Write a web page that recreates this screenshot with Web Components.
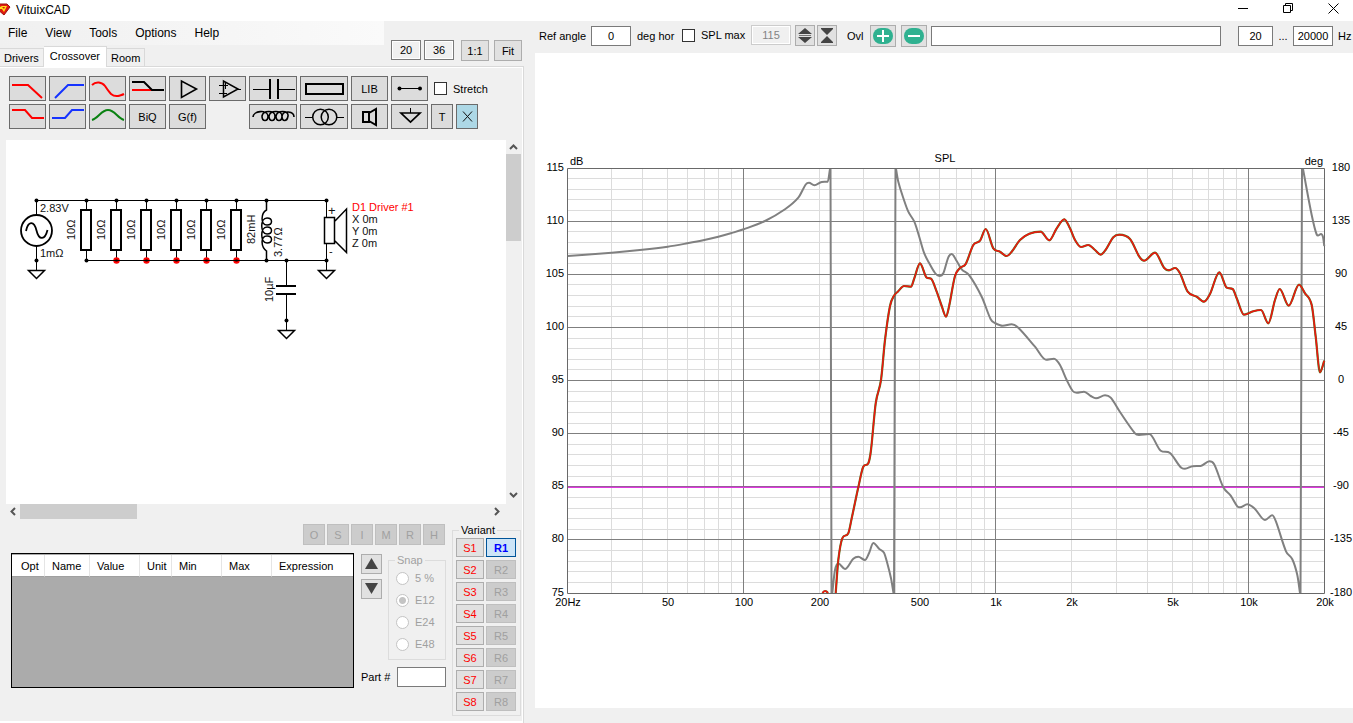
<!DOCTYPE html>
<html lang="en">
<head>
<meta charset="utf-8">
<title>VituixCAD</title>
<style>
  body { margin: 0; background: #f0f0f0; color: #000; font: 11px/14px "Liberation Sans", Arial, sans-serif; }
</style>
</head>
<body>
<vx-app></vx-app>
<script>
const controls = `
  * { box-sizing: border-box; }
  button, input { font: inherit; color: inherit; margin: 0; padding: 0; border-radius: 0; }
  button { display: grid; place-items: center; border: 1px solid #adadad; background: #e1e1e1; }
  button:disabled { background: #cccccc; border-color: #bfbfbf; color: #a0a0a0; }
  input[type=text] { height: 20px; min-width: 0; border: 1px solid #7a7a7a; background: #fff; text-align: center; }
  input[type=text]:disabled { background: #f0f0f0; border-color: #ccc; color: #838383; box-shadow: inset 0 0 0 1px #fff; }
  input[type=checkbox] { appearance: none; width: 13px; height: 13px; border: 1px solid #333; background: #fff; flex: none; }
  svg { display: block; fill: none; }
`;
function define(name, html, setup) {
  const template = document.createElement('template');
  template.innerHTML = html;
  customElements.define(name, class extends HTMLElement {
    constructor() {
      super();
      const root = this.attachShadow({ mode: 'open' });
      root.append(template.content.cloneNode(true));
      const style = document.createElement('style');
      style.textContent = controls;
      root.prepend(style);
    }
    connectedCallback() { if (setup) setup(this.shadowRoot, this); }
  });
}

define('vx-titlebar', `
<style>
  :host { display: flex; align-items: center; height: 21px; background: #fff; padding-right: 2px; font-size: 12px; }
  h1 { flex: 1; margin: 0; padding: 0 0 2px 5px; font: inherit; line-height: 14px; }
  .win { display: flex; gap: 9px; padding-bottom: 4px; }
  .win button { width: 36px; height: 17px; border: 0; background: none; }
  .logo { margin-bottom: 2px; }
</style>
<svg class="logo" width="11" height="13" viewBox="0 0 11 13"><path d="M-3 1H7L10 4 4 12-4 5Z" fill="#e01a10" stroke="#9d120c"/><path d="M0 4L2 3H7L4 9 2 6H0Z" fill="#ffe018"/><path d="M2 4H5L4 6Z" fill="#e01a10"/></svg>
<h1>VituixCAD</h1>
<div class="win">
  <button aria-label="Minimize"><svg width="11" height="11" stroke="#000"><path d="M0 5.5H10"/></svg></button>
  <button aria-label="Restore"><svg width="11" height="11" stroke="#000"><path d="M.5 2.5h7v7h-7zM2.5 2V.5h7v7H8"/></svg></button>
  <button aria-label="Close"><svg width="11" height="11" stroke="#000"><path d="M.5 .5l10 10M10.5 .5l-10 10"/></svg></button>
</div>`);

define('vx-header', `
<style>
  :host { display: grid; grid-template-columns: 384px 1fr; grid-template-rows: 24px 21px; height: 45px; }
  .menu { display: flex; font-size: 12px; background: linear-gradient(90deg, #f0f0f0, #fafafa); padding-left: 8px; }
  .menu a { color: #000; text-decoration: none; line-height: 24px; margin-right: 18px; }
  .tabs { display: flex; align-items: flex-end; grid-row: 2; }
  .tabs a { color: #000; text-decoration: none; height: 18px; padding: 0 4px; line-height: 18px; border: 1px solid #d9d9d9; border-width: 1px 1px 0 0; white-space: nowrap; }
  .tabs a[aria-current] { height: 21px; background: #fff; padding: 0 6px; margin-bottom: -1px; line-height: 19px; position: relative; }
  .view { grid-area: 1 / 2 / 3 / 3; display: flex; gap: 3px; justify-content: flex-end; align-items: flex-start; padding: 19px 2px 0 0; }
  .view input { width: 30px; box-shadow: inset 0 0 0 1px #fff; background: #f0f0f0 !important; }
  .view button { width: 28px; height: 21px; margin-left: 4px; }
  .view button + button { margin-left: 2px; }
</style>
<nav class="menu"><a href="#file">File</a><a href="#view">View</a><a href="#tools">Tools</a><a href="#options">Options</a><a href="#help">Help</a></nav>
<nav class="tabs"><a href="#drivers">Drivers</a><a href="#crossover" aria-current="page">Crossover</a><a href="#room">Room</a></nav>
<div class="view">
  <input type="text" value="20" aria-label="Grid columns"><input type="text" value="36" aria-label="Grid rows">
  <button>1:1</button><button>Fit</button>
</div>`);

define('vx-palette', `
<style>
  :host { display: grid; grid-template-columns: repeat(6, 37px) 48px 48px 37px 37px 22px 22px 1fr; grid-auto-rows: 25px; gap: 3px; padding: 9px 0 11px 9px; }
  button { border-color: #6b6b6b; background: #dcdcdc; }
  label { grid-column: span 3; display: flex; align-items: center; gap: 6px; padding-left: 3px; }
  .del { background: #add8e6; }
  .w { stroke: #000; stroke-width: 1; } .b { stroke-width: 2; stroke: #000; }
  .r { stroke: #f00; stroke-width: 2; } .u { stroke: #1533ff; stroke-width: 2; } .g { stroke: #0a8212; stroke-width: 2; }
</style>
<button aria-label="Low pass"><svg width="35" height="23"><path class="r" d="M2 8H18L32 21"/></svg></button>
<button aria-label="High pass"><svg width="35" height="23"><path class="u" d="M5 21L18 8H34"/></svg></button>
<button aria-label="All pass"><svg width="35" height="23"><path class="r" d="M2 8C6 4 12 5 15 9C19 15 22 20 28 19C31 18 32 18 34 17"/></svg></button>
<button aria-label="Shelf block"><svg width="35" height="23"><path class="r" d="M2 13H22"/><path class="b" d="M2 5H14L22 13H34"/></svg></button>
<button aria-label="Buffer"><svg width="35" height="23"><path stroke="#000" stroke-width="1.6" d="M11.5 4V20.5L26.5 12Z"/></svg></button>
<button aria-label="Operational amplifier"><svg width="35" height="23"><path stroke="#000" stroke-width="1.5" d="M13.5 4V20L28 12Z"/><path class="w" d="M9 8.5h9M9 16.5h8M15.5 5v7M28 12.5h3"/></svg></button>
<button aria-label="Capacitor"><svg width="46" height="23"><path class="w" d="M3 12.5H20M29 12.5H45"/><path class="b" d="M20 2V22M28 2V22"/></svg></button>
<button aria-label="Resistor"><svg width="46" height="23"><path class="b" d="M5 7H42V17H5Z"/></svg></button>
<button>LIB</button>
<button aria-label="Wire"><svg width="35" height="23"><path class="w" d="M7 11.5H29"/><circle cx="7.5" cy="11.5" r="2" fill="#000"/><circle cx="28" cy="11.5" r="2" fill="#000"/></svg></button>
<label><input type="checkbox">Stretch</label>
<button aria-label="Low shelf"><svg width="35" height="23"><path class="r" d="M2 5H15L22 13H34"/></svg></button>
<button aria-label="High shelf"><svg width="35" height="23"><path class="u" d="M2 13H15L22 5H34"/></svg></button>
<button aria-label="Peak"><svg width="35" height="23"><path class="g" d="M2 15C9 13 11 5 18 5C25 5 27 13 34 15"/></svg></button>
<button>BiQ</button><button>G(f)</button><span></span>
<button aria-label="Inductor"><svg width="46" height="23"><path stroke="#000" stroke-width="1.6" d="M3 12C3 6 17 4 18 11C18 17 12 17 12 11C13 5 25 5 25 11C25 17 19 17 19 11C20 5 32 5 32 11C32 17 26 17 26 11C27 5 39 5 38 11C37 17 32 17 32 11C33 5 44 6 44 12"/></svg></button>
<button aria-label="Transformer"><svg width="46" height="23" stroke="#000"><circle cx="19.5" cy="12" r="7.8" stroke-width="1.5"/><circle cx="28" cy="12" r="7.8" stroke-width="1.5"/><path d="M4 12.5H12M35 12.5H43"/></svg></button>
<button aria-label="Driver"><svg width="35" height="23"><path class="b" d="M11 7H17V17H11ZM17 8L24 4V20L17 16"/></svg></button>
<button aria-label="Ground"><svg width="35" height="23"><path class="w" d="M18.5 3V8"/><path stroke="#000" stroke-width="1.7" d="M9 8H28L18.5 17Z"/></svg></button>
<button>T</button><button class="del" aria-label="Delete"><svg width="20" height="23"><path stroke="#111" d="M6 6.5L15 16.5M15 6.5L6 16.5"/></svg></button>`);

define('vx-schematic', `
<style>
  :host { display: grid; grid-template: minmax(300px, 1fr) 15px / minmax(0, 1fr) 15px; margin: 0 1px 0 6px; }
  .sheet { background: #fff; overflow: hidden; }
  .v, .h { display: flex; }
  .v { flex-direction: column; } .v i { height: 87px; } .v button:last-child { margin-top: auto; }
  .h i { width: 117px; } .h button:last-child { margin-left: auto; }
  i { background: #cdcdcd; }
  .v button, .h button { width: 14px; height: 14px; border: 0; background: none; }
  .h { padding-right: 2px; } .h button { height: 15px; }
  .v button:last-child { height: 18px; }
  text { font-size: 11px; fill: #111; } .red { fill: #f00; }
</style>
<div class="sheet"><svg width="100%" height="100%">
  <g transform="translate(-6 -140)">
    <g id="parts"></g>
    <g stroke="#000" stroke-width="1">
      <path d="M36.5 200.5H326.5M86.5 260.5H326.5M36.5 200V215M36.5 246V270M326.5 200V217M326.5 244V270M286.5 260V286M286.5 294V330"/>
      <g stroke-width="1.5"><circle cx="36.5" cy="230.5" r="15.5" stroke-width="1.8"/>
      <path stroke-width="1.8" d="M26 231C28 221 34 220 36.5 230.5S45 240 47.5 230"/>
      <path d="M28.5 270.5H44.5L36.5 278.5ZM318.5 270.5H334.5L326.5 278.5ZM278.5 330.5H294.5L286.5 338.5Z"/>
      <path d="M324.5 217.5H334.5V243.5H324.5ZM335 221L346.5 209V252.5L335 241"/>
      <path d="M266.5 200V210C261 213 260 225 267 225C273 225 273 218 267 218C260 218 260 234 267 234C273 234 273 227 267 227C260 227 260 243 267 243C273 243 273 236 267 236C260 236 261 247 266.5 251V260"/></g>
      <path stroke-width="2" d="M276 286H296M276 294H296"/>
    </g>
    <g fill="#000"><circle cx="36.5" cy="200.5" r="2"/><circle cx="36.5" cy="260.5" r="2"/><circle cx="86.5" cy="260.5" r="2"/><circle cx="266.5" cy="200.5" r="2"/><circle cx="326.5" cy="200.5" r="2"/><circle cx="266.5" cy="260.5" r="2"/><circle cx="286.5" cy="260.5" r="2"/><circle cx="326.5" cy="260.5" r="2"/><circle cx="286.5" cy="320.5" r="2"/></g>
    <text x="40" y="212">2.83V</text><text x="40" y="257">1mΩ</text>
    <text transform="translate(255 244) rotate(-90)">82mH</text>
    <text transform="translate(282 257) rotate(-90)">3.77Ω</text>
    <text transform="translate(273 302) rotate(-90)">10µF</text>
    <text x="328" y="215" style="font-size:13px">+</text><text x="329" y="255">-</text>
    <text class="red" x="352" y="211">D1 Driver #1</text>
    <text x="352" y="223">X 0m</text><text x="352" y="235">Y 0m</text><text x="352" y="247">Z 0m</text>
  </g></svg></div>
<div class="v"><button aria-label="Scroll up"><svg width="9" height="6"><path d="M1 5L4.5 1.5 8 5" stroke="#555" stroke-width="2"/></svg></button><i></i><button aria-label="Scroll down"><svg width="9" height="6"><path d="M1 1L4.5 4.5 8 1" stroke="#555" stroke-width="2"/></svg></button></div>
<div class="h"><button aria-label="Scroll left"><svg width="6" height="9"><path d="M5 1L1.5 4.5 5 8" stroke="#555" stroke-width="2"/></svg></button><i></i><button aria-label="Scroll right"><svg width="6" height="9"><path d="M1 1L4.5 4.5 1 8" stroke="#555" stroke-width="2"/></svg></button></div>`,
root => {
  let out = '';
  for (let k = 0; k < 6; k++) {
    const x = 86.5 + 30 * k;
    out += `<path stroke="#000" d="M${x} 200V209M${x} 251V260"/><path stroke="#000" stroke-width="2" d="M${x - 5.5} 210H${x + 4.5}V250H${x - 5.5}Z"/><circle cx="${x}" cy="200.5" r="2" fill="#000"/>`;
    if (k) out += `<circle cx="${x}" cy="260.5" r="3.2" fill="#f00"/><circle cx="${x}" cy="260.5" r="1.5" fill="#700"/>`;
    out += `<text transform="translate(${x - 11.5} 240) rotate(-90)">10Ω</text>`;
  }
  root.getElementById('parts').innerHTML = out;
});

define('vx-actions', `
<style>
  :host { display: flex; justify-content: flex-end; gap: 2px; padding-right: 1px; }
  button { width: 22px; height: 21px; }
</style>
<button disabled>O</button><button disabled>S</button><button disabled>I</button><button disabled>M</button><button disabled>R</button><button disabled>H</button>`);

define('vx-parts', `
<style>
  :host { display: block; border: 1px solid #000; background: #ababab; padding-top: 1px; }
  table { width: 100%; table-layout: fixed; border-collapse: separate; border-spacing: 0; background: #fff; }
  th { height: 22px; font-weight: normal; text-align: left; padding: 0 0 0 7px; border-right: 1px solid #e5e5e5; border-bottom: 1px solid #a0a0a0; }
  th:first-child { padding-left: 9px; } th:last-child { border-right: 0; }
</style>
<table><colgroup><col style="width:33px"><col style="width:45px"><col style="width:50px"><col style="width:32px"><col style="width:50px"><col style="width:50px"><col></colgroup>
<thead><tr><th>Opt</th><th>Name</th><th>Value</th><th>Unit</th><th>Min</th><th>Max</th><th>Expression</th></tr></thead></table>`);

define('vx-group', `
<style>
  :host { display: block; }
  fieldset { margin: 0; min-width: 0; border: 1px solid #dcdcdc; padding: var(--pt, 2px) var(--pr, 3px) var(--pb, 4px) var(--pl, 3px); }
  legend { padding: 0 2px; margin-left: var(--legend, 0); line-height: 12px; color: var(--legend-color, #000); }
</style>
<fieldset><legend><slot name="title"></slot></legend><slot></slot></fieldset>`);

define('vx-variants', `
<style>
  vx-group { --legend: 3px; --pr: 4px; }
  .list { display: grid; grid-template-columns: 28px 30px; grid-auto-rows: 19px; gap: 3px 2px; }
  .s { color: #f00; } .on { background: #cce4f7; border-color: #005499; color: #00f; font-weight: bold; }
</style>
<vx-group><span slot="title">Variant</span><div class="list"></div></vx-group>`,
root => {
  let out = '';
  for (let n = 1; n <= 8; n++)
    out += `<button class="s">S${n}</button><button ${n === 1 ? 'class="on"' : 'disabled'}>R${n}</button>`;
  root.querySelector('.list').innerHTML = out;
});

define('vx-snap', `
<style>
  :host { display: block; color: #a0a0a0; }
  vx-group { --pl: 7px; --pr: 0; --pt: 1px; --legend-color: #a0a0a0; --legend: -1px; }
  label { display: flex; align-items: center; gap: 6px; height: 22px; }
  input { appearance: none; width: 13px; height: 13px; border: 1px solid #c4c4c4; border-radius: 50%; background: #fff; }
  input:checked { background: radial-gradient(circle, #c4c4c4 3px, #fff 4px); }
</style>
<vx-group><span slot="title">Snap</span>
<label><input type="radio" name="snap" disabled>5 %</label>
<label><input type="radio" name="snap" disabled checked>E12</label>
<label><input type="radio" name="snap" disabled>E24</label>
<label><input type="radio" name="snap" disabled>E48</label></vx-group>`);

define('vx-editor', `
<style>
  :host { display: grid; grid-template-columns: minmax(0, 1fr) 69px; gap: 6px; padding: 5px 1px 5px 11px; }
  .main { display: grid; grid-template: 21px auto auto / minmax(0, 1fr) 21px 64px; column-gap: 0; align-content: start; }
  vx-actions { grid-column: 1 / -1; }
  vx-parts { grid-row: 2 / 4; margin: 8px 7px 0 0; }
  .move { display: flex; flex-direction: column; gap: 5px; padding-top: 9px; }
  .move button { height: 20px; }
  vx-snap { margin: 9px 0 0 6px; }
  .part { grid-column: 2 / 4; display: flex; align-items: center; justify-content: space-between; margin: 7px 0 1px; }
  .part input { width: 49px; }
</style>
<div class="main">
  <vx-actions></vx-actions><vx-parts></vx-parts>
  <div class="move">
    <button aria-label="Move up"><svg width="13" height="12"><path fill="#444" d="M6.5 0L13 11H0Z"/></svg></button>
    <button aria-label="Move down"><svg width="13" height="12"><path fill="#444" d="M6.5 11L13 0H0Z"/></svg></button>
  </div>
  <vx-snap></vx-snap>
  <label class="part">Part #<input type="text"></label>
</div>
<vx-variants></vx-variants>`);

define('vx-chart-bar', `
<style>
  :host { display: grid; grid-template-columns: 52px 40px 51px 69px 40px 56px 23px 61px minmax(60px, 1fr) 52px 20px 40px 20px; align-items: center; height: 32px; padding-left: 4px; white-space: nowrap; padding-bottom: 2px; }
  .check { display: flex; align-items: center; gap: 6px; }
  .check, .spl { margin-bottom: 2px; }
  .steps { display: flex; gap: 2px; padding-left: 4px; margin-bottom: 2px; }
  .steps button { width: 20px; height: 21px; }
  .ovl { display: flex; gap: 5px; } .ovl button { width: 26px; height: 22px; }
  .deg { padding-left: 6px; } .from { margin-left: 17px; width: 35px; } .dots { text-align: center; } .hz { padding-left: 5px; }
</style>
<label for="ref">Ref angle</label><input type="text" id="ref" value="0"><span class="deg">deg hor</span>
<label class="check"><input type="checkbox">SPL max</label><input class="spl" type="text" value="115" disabled aria-label="SPL max value">
<div class="steps">
  <button aria-label="Expand scale"><svg width="14" height="17"><path fill="#444" d="M7 1L14 7H0ZM7 16L14 10H0Z"/><path stroke="#777" d="M1 8.5H13"/></svg></button>
  <button aria-label="Compress scale"><svg width="14" height="17"><path fill="#444" d="M7 8L13 2H1ZM7 9L13 15H1Z"/><path stroke="#444" d="M1 1.5H13M1 15.5H13"/></svg></button>
</div>
<label for="overlay">Ovl</label>
<div class="ovl">
  <button aria-label="Add overlay"><svg width="20" height="18"><rect y="1" width="20" height="16" rx="8" fill="#2fb190"/><path stroke="#fff" stroke-width="2" d="M10 3V15M4 9H16"/></svg></button>
  <button aria-label="Remove overlay"><svg width="20" height="18"><rect y="1" width="20" height="16" rx="8" fill="#2fb190"/><path stroke="#fff" stroke-width="2" d="M4 9H16"/></svg></button>
</div>
<input type="text" id="overlay">
<input class="from" type="text" value="20" aria-label="Lowest frequency"><span class="dots">...</span><input type="text" value="20000" aria-label="Highest frequency"><span class="hz">Hz</span>`);

const phase = [
  [[567.7,256],[611.7,252.7],[642.3,249.8],[667.7,246.7],[687.3,243.3],[704.3,240],[718.3,236.7],[731.7,233],[743.7,229.3],[765,221],[785,209.3],[798.3,197.7],[805.7,184.5],[809,182.7],[814.3,185.3],[821.7,182],[827.7,181.7],[830,169]],
  [[832.3,593],[835,570],[838.3,563.5],[845,569],[853.3,558.7],[858.3,556.7],[865,560],[869,553.3],[873.3,543],[879.3,549],[884,552.7],[887.3,563.3],[891,578.3],[893.5,593]],
  [[896,169],[898.3,181.7],[903.3,198],[908.3,211.7],[914.3,221.7],[919,236],[924,252.7],[929.3,263.3],[935,273],[939.3,276],[943.3,273.3],[948.3,257.3],[951.7,254],[956.7,261],[961.7,269.3],[969.3,275.3],[981.7,296.7],[990.7,319.3],[995,323],[1002.7,325.7],[1011.7,324.3],[1018.3,327.7],[1035,346.7],[1046,359.7],[1054,358.7],[1060,365],[1066.7,380],[1072.7,391],[1076.7,392.7],[1084,391.7],[1090.7,396],[1096,398.3],[1105,395.3],[1110.7,397.7],[1120,412],[1135,433.3],[1139,434.9],[1149.3,434],[1160.7,450.7],[1170,453],[1181.7,468],[1185,468.7],[1192.7,466.2],[1200.7,465.9],[1209.3,461.3],[1214,464],[1223.3,487.3],[1230.7,495.7],[1237.3,506.3],[1240,507.3],[1247.3,504.3],[1255,509],[1265,520],[1272.3,515.3],[1276,521.7],[1286,551.3],[1292.3,559.3],[1297.3,575],[1300,593]],
  [[1303,169],[1311.7,215],[1316.7,234.5],[1318,235.5],[1321,234],[1323,237],[1324.3,246]]
];
const spl = [[835.7,593],[838.3,560],[842.3,538.3],[848.3,533.3],[851.7,518.3],[858.3,487.3],[863.3,466.7],[868.3,463.3],[871,450],[875.7,403.3],[881,380],[885,340],[890,306],[894,295.7],[898,291.5],[904,286],[911,286.7],[914.3,278.3],[920,263.3],[926.7,277.7],[931,278.7],[936.7,291.7],[941.7,306],[946,316.7],[949,306.7],[955,276],[960,268],[965.7,264],[973.3,245],[980,240.7],[985.7,229],[993.3,248.3],[1000,251.7],[1006.7,256],[1011.7,251.7],[1020,240],[1029.3,233.7],[1040.7,231.7],[1049.3,240.3],[1056.7,228.3],[1064.3,219.3],[1070,228.3],[1075,240],[1081,247],[1088.3,245],[1095,250],[1100.7,254.7],[1106,249.3],[1113.3,237.3],[1119.3,234.7],[1130,239],[1139.3,256.7],[1144,260.7],[1155,252.7],[1164,267.7],[1169,270.3],[1175,268],[1180,273.3],[1187.7,291.7],[1196.7,296.7],[1204,301.7],[1210,294],[1219.3,272.3],[1226.7,287.7],[1232.7,289],[1236.7,298.3],[1244,314.7],[1253.3,311.3],[1261,310],[1268.3,323.3],[1275,300],[1279.7,289],[1288.7,305.7],[1299,284.7],[1305,293.3],[1311.7,305],[1315.7,336.7],[1320,372.3],[1324.3,360.7]];

// Cubic interpolation with mean slopes, limited so that it never overshoots an extreme.
function curve(p) {
  const n = p.length, d = [], m = [];
  for (let i = 0; i < n - 1; i++) d[i] = (p[i + 1][1] - p[i][1]) / (p[i + 1][0] - p[i][0]);
  m[0] = d[0]; m[n - 1] = d[n - 2];
  for (let i = 1; i < n - 1; i++) {
    const a = d[i - 1], b = d[i], mean = (p[i + 1][1] - p[i - 1][1]) / (p[i + 1][0] - p[i - 1][0]);
    m[i] = a * b <= 0 ? 0 : Math.sign(a) * Math.min(Math.abs(mean), 3 * Math.abs(a), 3 * Math.abs(b));
  }
  let s = `M${p[0]}`;
  for (let i = 0; i < n - 1; i++) {
    const h = (p[i + 1][0] - p[i][0]) / 3;
    s += `C${(p[i][0] + h).toFixed(2)} ${(p[i][1] + h * m[i]).toFixed(2)} ${(p[i + 1][0] - h).toFixed(2)} ${(p[i + 1][1] - h * m[i + 1]).toFixed(2)} ${p[i + 1]}`;
  }
  return s;
}

define('vx-chart', `
<style>
  :host { display: grid; min-height: 0; background: #fff; }
  svg { width: 100%; height: 100%; }
  text { font-size: 11px; fill: #000; }
  .end { text-anchor: end; } .mid { text-anchor: middle; }
</style>
<svg viewBox="535 53 818 655" role="img" aria-label="SPL and phase"></svg>`,
root => {
  const fx = f => Math.floor(567 + 757 * Math.log10(f / 20) / 3 + 1e-6) + 0.5;
  const fy = k => Math.floor(168 + 10.625 * k) + 0.5;
  let minor = '', major = '', labels = '';
  for (const decade of [10, 100, 1000, 10000])
    for (let i = 1; i < 10; i++) {
      const f = decade * i;
      if (f <= 20 || f >= 20000) continue;
      if (i === 1) major += `M${fx(f)} 168V593`; else minor += `M${fx(f)} 168V593`;
    }
  for (let k = 1; k < 40; k++)
    if (k % 5) minor += `M567 ${fy(k)}H1325`; else major += `M567 ${fy(k)}H1325`;
  for (let k = 0; k <= 8; k++) {
    const y = Math.floor(fy(5 * k)) + 3;
    labels += `<text class="end" x="564" y="${y}">${115 - 5 * k}</text><text class="mid" x="1341" y="${y}">${180 - 45 * k}</text>`;
  }
  for (const [f, t] of [[20, '20Hz'], [50, '50'], [100, '100'], [200, '200'], [500, '500'], [1000, '1k'], [2000, '2k'], [5000, '5k'], [10000, '10k'], [20000, '20k']])
    labels += `<text class="mid" x="${Math.floor(fx(f)) + 1}" y="606">${t}</text>`;
  const red = curve(spl) + 'M822.5 593Q825 589 828 593';
  root.querySelector('svg').innerHTML = `
    <path stroke="#dcdcdc" d="${minor}"/><path stroke="#7f7f7f" d="${major}"/>
    <path stroke="#696969" d="M567.5 168.5H1324.5V593.5H567.5Z"/>
    <path stroke="#e03ae0" d="M568 487.5H1324"/><path stroke="#9a5a9a" d="M568 486.5H1324"/>
    <path stroke="#808080" stroke-width="2" stroke-linejoin="round" d="${phase.map(curve).join('')}M830.5 169L831.5 593M895.5 169L894 593M1302 169L1300.5 593"/>
    <path stroke="#4c7a22" stroke-width="2.2" d="${red}"/><path stroke="#f01410" stroke-width="1.5" d="${red}"/>
    ${labels}
    <text x="570" y="165">dB</text><text class="mid" x="945" y="162">SPL</text><text class="end" x="1323" y="165">deg</text>`;
});

define('vx-app', `
<style>
  :host { display: flex; flex-direction: column; min-height: 100vh; }
  main { flex: 1; display: grid; grid-template-columns: 524px minmax(0, 1fr); column-gap: 11px; }
  .left, .right { display: flex; flex-direction: column; min-width: 0; }
  .pane { flex: 1; display: flex; flex-direction: column; border: 0 solid #d9d9d9; border-width: 1px 1px 0 0; box-shadow: inset -1px 1px #fff, inset 0 -2px #fff; padding: 0 1px 2px 0; }
  vx-schematic, vx-chart { flex: 1; }
  vx-chart { margin-bottom: 15px; }
</style>
<vx-titlebar></vx-titlebar>
<main>
  <section class="left"><vx-header></vx-header><div class="pane"><vx-palette></vx-palette><vx-schematic></vx-schematic><vx-editor></vx-editor></div></section>
  <section class="right"><vx-chart-bar></vx-chart-bar><vx-chart></vx-chart></section>
</main>`);
</script>
</body>
</html>
